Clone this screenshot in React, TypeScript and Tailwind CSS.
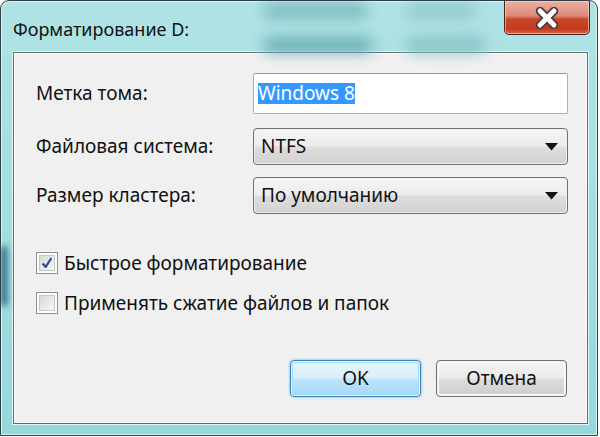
import React from "react";

const font = { fontFamily: '"Noto Sans", "Open Sans", sans-serif' };

function Arrow() {
  return (
    <svg width="13" height="8" viewBox="0 0 13 8" className="shrink-0">
      <path d="M0 0 H13 L6.5 7.5 Z" fill="#111" />
    </svg>
  );
}

function Combo({ value }: { value: string }) {
  return (
    <div className="h-[37px] w-[315px] rounded-[4px] border border-[#707070] p-px">
      <div className="flex h-full items-center justify-between rounded-[2px] bg-[linear-gradient(#f4f4f4_0%,#ececec_48%,#dedede_52%,#d2d2d2_100%)] pl-[6px] pr-[8px]">
        <span className="text-[19px] text-[#111]">{value}</span>
        <Arrow />
      </div>
    </div>
  );
}

function Check({ checked, label }: { checked: boolean; label: string }) {
  return (
    <div className="flex h-[22px] items-center gap-[6px]">
      <div className="flex h-[22px] w-[22px] items-center justify-center border border-[#8f8f8f] bg-white p-[2px]">
        <div className="relative h-full w-full border border-[#c5c5c5] bg-[linear-gradient(135deg,#d9d9d9,#f7f7f7)]">
          {checked && (
            <svg viewBox="0 0 16 16" className="absolute inset-0 h-full w-full">
              <path d="M3 8.5 L6.5 12.5 L13 2.5" fill="none" stroke="#2b4b8c" strokeWidth="2.4" strokeLinejoin="round" />
            </svg>
          )}
        </div>
      </div>
      <span className="text-[19px] text-[#111]">{label}</span>
    </div>
  );
}

export default function App() {
  return (
    <div className="h-[437px] w-[600px] bg-white" style={font}>
      <div className="relative h-[436px] w-[598px] overflow-hidden rounded-t-[9px] border border-[#2f3f45] bg-[linear-gradient(180deg,#b0e3e5_0%,#a6dfe1_40%,#96d8da_100%)] pt-[51px] pl-[12px] pr-[10px] pb-[12px] shadow-[inset_0_0_0_1px_#d9f3f4]">
        <div className="absolute left-[262px] top-[2px] h-[16px] w-[105px] rounded-full bg-[#7dbcc0] blur-[7px]" />
        <div className="absolute left-[262px] top-[36px] h-[16px] w-[110px] rounded-full bg-[#6fb0b5] blur-[7px]" />
        <div className="absolute left-[405px] top-[3px] h-[14px] w-[70px] rounded-full bg-[#8fc8cb] blur-[7px]" />
        <div className="absolute left-[405px] top-[36px] h-[16px] w-[80px] rounded-full bg-[#89c3c6] blur-[7px]" />
        <div className="absolute left-[0px] top-[245px] h-[60px] w-[6px] rounded-full bg-[#2a5a80] blur-[3px]" />

        <div className="absolute left-[12px] top-[15px] text-[18px] leading-[26px] text-[#111]">Форматирование D:</div>

        <div className="absolute left-[503px] top-[-1px] flex h-[35px] w-[86px] items-center justify-center rounded-b-[5px] border border-[#4a2018] bg-[linear-gradient(180deg,#eab0a4_0%,#dc8a78_45%,#c9482c_55%,#c4391d_85%,#d9684c_100%)] shadow-[inset_0_0_0_1px_rgba(255,220,210,0.6)]">
          <svg width="24" height="22" viewBox="0 0 24 22">
            <path d="M5 4 L19 18 M19 4 L5 18" stroke="#4a3a3a" strokeWidth="8.5" strokeLinecap="round" />
            <path d="M5 4 L19 18 M19 4 L5 18" stroke="#fff" strokeWidth="5" strokeLinecap="round" />
          </svg>
        </div>

        <div className="h-[372px] w-[575px] border border-[#5c6c70] shadow-[0_0_0_1px_#e4f6f6]">
          <div className="h-full w-full border border-white bg-[#f0f0f0] pl-[21px] pt-[19px]">
            <div className="grid grid-cols-[217px_315px] items-center">
              <span className="text-[19px] text-[#111]">Метка тома:</span>
              <div className="flex h-[41px] items-center rounded-[2px] border border-[#abadb3] border-t-[#8c98a2] bg-white pl-[4px]">
                <span className="bg-[#3399ff] text-[19px] leading-[21px] text-white">Windows 8</span>
              </div>
              <span className="mt-[14px] text-[19px] text-[#111]">Файловая система:</span>
              <div className="mt-[14px]"><Combo value="NTFS" /></div>
              <span className="mt-[12px] text-[19px] text-[#111]">Размер кластера:</span>
              <div className="mt-[12px]"><Combo value="По умолчанию" /></div>
            </div>
            <div className="mt-[38px] flex flex-col gap-[18px]">
              <Check checked label="Быстрое форматирование" />
              <Check checked={false} label="Применять сжатие файлов и папок" />
            </div>
            <div className="mt-[46px] flex gap-[15px] pl-[254px]">
              <div className="h-[37px] w-[131px] rounded-[4px] border border-[#3c7fb1] p-px shadow-[0_0_3px_#5cb8f0]">
                <div className="flex h-full items-center justify-center rounded-[2px] border border-[#9fdcf8] bg-[linear-gradient(#e5f4fc_0%,#d8effa_48%,#bee6fd_52%,#a7d9f5_100%)] text-[19px] text-[#111]">
                  OK
                </div>
              </div>
              <div className="h-[37px] w-[131px] rounded-[4px] border border-[#707070] p-px">
                <div className="flex h-full items-center justify-center rounded-[2px] border border-[#fbfbfb] bg-[linear-gradient(#f2f2f2_0%,#ebebeb_48%,#dddddd_52%,#cfcfcf_100%)] text-[19px] text-[#111]">
                  Отмена
                </div>
              </div>
            </div>
          </div>
        </div>
      </div>
    </div>
  );
}
